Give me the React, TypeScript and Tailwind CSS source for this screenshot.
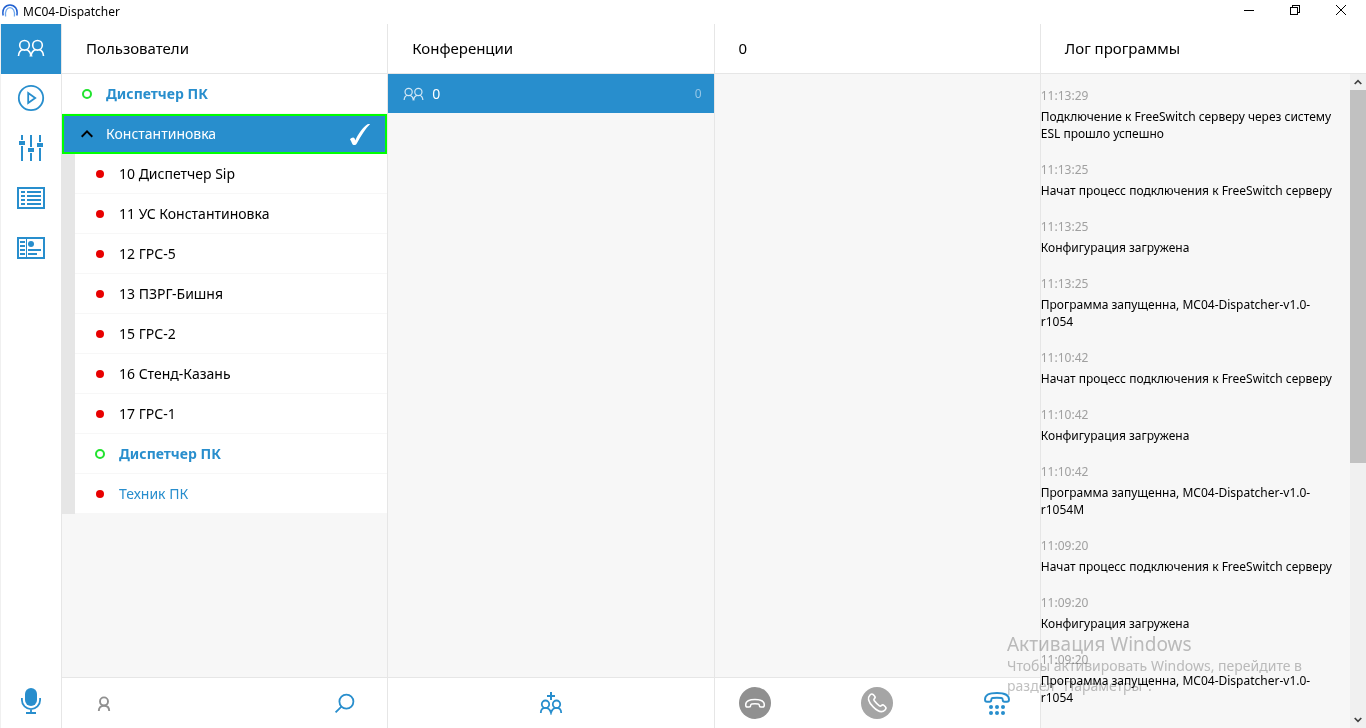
import React from 'react';
import clsx from 'clsx';

type Status = 'online' | 'offline' | 'group';

interface Contact {
  name: string;
  status: Status;
  tone?: string;
}

interface LogEntry {
  time: string;
  text: string;
}

const members: Contact[] = [
  { name: '10 Диспетчер Sip', status: 'offline' },
  { name: '11 УС Константиновка', status: 'offline' },
  { name: '12 ГРС-5', status: 'offline' },
  { name: '13 ПЗРГ-Бишня', status: 'offline' },
  { name: '15 ГРС-2', status: 'offline' },
  { name: '16 Стенд-Казань', status: 'offline' },
  { name: '17 ГРС-1', status: 'offline' },
  { name: 'Диспетчер ПК', status: 'online', tone: 'font-bold text-[#288ecd]' },
  { name: 'Техник ПК', status: 'offline', tone: 'text-[#288ecd]' },
];

const log: LogEntry[] = [
  { time: '11:13:29', text: 'Подключение к FreeSwitch серверу через систему ESL прошло успешно' },
  { time: '11:13:25', text: 'Начат процесс подключения к FreeSwitch серверу' },
  { time: '11:13:25', text: 'Конфигурация загружена' },
  { time: '11:13:25', text: 'Программа запущенна, MC04-Dispatcher-v1.0-r1054' },
  { time: '11:10:42', text: 'Начат процесс подключения к FreeSwitch серверу' },
  { time: '11:10:42', text: 'Конфигурация загружена' },
  { time: '11:10:42', text: 'Программа запущенна, MC04-Dispatcher-v1.0-r1054M' },
  { time: '11:09:20', text: 'Начат процесс подключения к FreeSwitch серверу' },
  { time: '11:09:20', text: 'Конфигурация загружена' },
  { time: '11:09:20', text: 'Программа запущенна, MC04-Dispatcher-v1.0-r1054' },
];

function PeopleIcon({ className }: { className?: string }) {
  return (
    <svg viewBox="0 0 28 18" className={className} fill="none" stroke="currentColor" strokeWidth="1.6">
      <circle cx="7.5" cy="6.3" r="4.8" />
      <circle cx="20.5" cy="6.3" r="4.8" />
      <path d="M1.500 17c.2-3.400 1.700-5.600 4.300-6.400M9.200 10.600c2.600.8 4.200 3 4.800 6.200.6-3.200 2.200-5.400 4.800-6.200M22.200 10.600c2.600.8 4.100 3 4.300 6.400" />
      <path d="M12.500 17h3" strokeWidth="1" />
    </svg>
  );
}

function PlayIcon() {
  return (
    <svg viewBox="0 0 28 28" className="size-7" fill="none" stroke="currentColor" strokeWidth="1.8">
      <circle cx="14" cy="14" r="12.2" />
      <path d="M11.2 9v10l7-5z" />
    </svg>
  );
}

function SlidersIcon() {
  return (
    <svg viewBox="0 0 28 28" className="size-7" fill="currentColor">
      <path d="M4 1h2v26H4zM13 1h2v26h-2zM22 1h2v26h-2z" />
      <path d="M1 6h8v6H1zM10 13h8v6h-8zM19 8h8v6h-8z" fill="#fff" />
      <path d="M2 7h6v4H2zM11 14h6v4h-6zM20 9h6v4h-6z" />
    </svg>
  );
}

function ListIcon() {
  return (
    <svg viewBox="0 0 28 22" className="h-[22px] w-7" fill="none" stroke="currentColor" strokeWidth="2">
      <path d="M1 1h26v20H1z" />
      <path d="M4 5h4M10 5h14M4 9h4M10 9h14M4 13h4M10 13h14M4 17h4M10 17h14" />
    </svg>
  );
}

function CardIcon() {
  return (
    <svg viewBox="0 0 28 22" className="h-[22px] w-7" fill="none" stroke="currentColor" strokeWidth="2">
      <path d="M1 1h26v20H1z" />
      <path d="M3 5h5M3 9h5M3 13h5M3 17h5M11 13h13M11 17h9" />
      <path d="M9.5 1v20" strokeWidth="1" />
      <circle cx="14" cy="7" r="3" fill="currentColor" stroke="none" />
    </svg>
  );
}

function MicIcon() {
  return (
    <svg viewBox="0 0 20 26" className="h-[26px] w-5" fill="none" stroke="currentColor" strokeWidth="1.8">
      <rect x="4" y="0" width="12" height="18" rx="6" fill="currentColor" stroke="none" />
      <path d="M.9 10v2a9.1 9.1 0 0 0 18.2 0v-2M10 21v4M5 25h10" />
    </svg>
  );
}

function UserIcon() {
  return (
    <svg viewBox="0 0 24 24" className="size-6" fill="none" stroke="currentColor" strokeWidth="1.9">
      <circle cx="12" cy="10.4" r="4" />
      <path d="M6.800 20c0-3.200 1.800-5.300 5.200-5.300s5.200 2.100 5.200 5.300" />
    </svg>
  );
}

function SearchIcon() {
  return (
    <svg viewBox="0 0 24 24" className="size-6" fill="none" stroke="currentColor" strokeWidth="1.8">
      <circle cx="13.4" cy="10.6" r="7" />
      <path d="M8.4 15.6 2.6 21.4" />
    </svg>
  );
}

function AddGroupIcon() {
  return (
    <svg viewBox="0 0 24 24" className="size-6" fill="none" stroke="currentColor" strokeWidth="1.8">
      <path d="M12 1v8M8 5h8" strokeWidth="2" />
      <circle cx="6.500" cy="13.200" r="3.700" />
      <circle cx="17.500" cy="13.200" r="3.700" />
      <path d="M1.800 22c0-3 1.700-5.100 4.700-5.100s4.700 2.100 5.500 4.900c.8-2.800 2.500-4.900 5.500-4.900s4.700 2.100 4.700 5.100" />
    </svg>
  );
}

const handset =
  'M1.2 6.4C1.2 2.6 5 1 10.5 1s9.300 1.600 9.300 5.400c0 1.600-.6 2.200-1.800 2.200h-1.600c-1.200 0-1.600-.6-1.600-1.800 0-1-.4-1.200-1-1.300-2-.3-4.600-.3-6.600 0-.6.100-1 .3-1 1.300 0 1.200-.4 1.800-1.600 1.800H3c-1.200 0-1.800-.6-1.800-2.200z';

function HangUpIcon() {
  return (
    <svg viewBox="0 0 32 32" className="size-8" fill="none">
      <circle cx="16" cy="16" r="16" fill="#909090" />
      <path d={handset} transform="translate(5.5 11.500)" stroke="#fff" strokeWidth="1.5" />
    </svg>
  );
}

function CallIcon() {
  return (
    <svg viewBox="0 0 32 32" className="size-8" fill="none">
      <circle cx="16" cy="16" r="16" fill="#a5a5a5" />
      <path d={handset} transform="translate(15.8 16.200) rotate(-135) scale(1.140) translate(-10.500 -5.500)" stroke="#fff" strokeWidth="1.4" />
    </svg>
  );
}

function DialpadIcon() {
  return (
    <svg viewBox="0 0 28 24" className="h-6 w-7" fill="none">
      <path
        d="M2 8.500C2 3.500 6 2 14 2s12 1.500 12 6.500c0 1.500-.6 2.300-2 2.300h-2.500c-1.500 0-1.800-.8-1.800-2.100 0-1.200-.5-1.600-1.300-1.700-2.800-.4-6-.4-8.800 0-.8.100-1.300.5-1.300 1.700 0 1.300-.3 2.100-1.800 2.100H4c-1.400 0-2-.8-2-2.300z"
        stroke="currentColor"
        strokeWidth="1.900"
      />
      <g fill="currentColor">
        <circle cx="8" cy="16" r="2" />
        <circle cx="14" cy="16" r="2" />
        <circle cx="20" cy="16" r="2" />
        <circle cx="8" cy="22" r="2" />
        <circle cx="14" cy="22" r="2" />
        <circle cx="20" cy="22" r="2" />
      </g>
    </svg>
  );
}

function StatusMark({ status }: { status: Status }) {
  return (
    <svg viewBox="0 0 12 12" className="size-3 shrink-0" fill="none">
      {status === 'online' && <circle cx="6" cy="6" r="4" stroke="#21e32f" strokeWidth="2" />}
      {status === 'offline' && <circle cx="6" cy="6" r="4" fill="#e80000" />}
      {status === 'group' && <path d="M.7 8.700 6 3.400l5.300 5.300" stroke="#000" strokeWidth="2" />}
    </svg>
  );
}

function ContactRow({ name, status, tone }: Contact) {
  return (
    <li className="border-b border-[#f7f7f7]">
      <button className={clsx('flex h-[39px] w-full items-center gap-[13px] bg-white pl-[19px] text-left', tone)}>
        <StatusMark status={status} />
        {name}
      </button>
    </li>
  );
}

function Column({ title, footer, children }: { title: string; footer?: React.ReactNode; children?: React.ReactNode }) {
  return (
    <section className="flex min-h-0 min-w-0 flex-col border-l border-[#e6e6e6] bg-[#f7f7f7]">
      <h2 className="flex h-[50px] shrink-0 items-center border-b border-[#e6e6e6] bg-white pl-6 text-[15px]">{title}</h2>
      <div className="flex min-h-0 flex-1 flex-col">{children}</div>
      {footer && <footer className="h-[51px] shrink-0 border-t border-[#e6e6e6] bg-white">{footer}</footer>}
    </section>
  );
}

const navItems = [
  { label: 'Пользователи', icon: <PeopleIcon className="h-[18px] w-7" /> },
  { label: 'Воспроизведение', icon: <PlayIcon /> },
  { label: 'Настройки', icon: <SlidersIcon /> },
  { label: 'Список', icon: <ListIcon /> },
  { label: 'Карточки', icon: <CardIcon /> },
];

function TitleBar() {
  return (
    <header className="flex h-6 shrink-0 items-center justify-between">
      <div className="flex items-center gap-[5px] pl-0.5">
        <svg viewBox="0 0 16 16" className="size-4" fill="none">
          <path d="M1.200 11.500C-.3 5 3.500 1 8 1s8.300 4 6.800 10.500" stroke="#1f5fd0" strokeWidth="1.500" />
          <path d="M3.600 12.500C2.800 7 5 3.600 8 3.600s5.200 3.400 4.400 8.900" stroke="#6fa8ee" strokeWidth="1.300" />
        </svg>
        <h1 className="text-xs">MC04-Dispatcher</h1>
      </div>
      <div className="flex h-full pr-0.5 pb-1">
        <button aria-label="Свернуть" className="flex w-[46px] items-center justify-center">
          <svg viewBox="0 0 10 10" className="size-2.5" stroke="#000" shapeRendering="crispEdges"><path d="M0 5.500h10" /></svg>
        </button>
        <button aria-label="Развернуть" className="flex w-[46px] items-center justify-center">
          <svg viewBox="0 0 10 10" className="size-2.5" stroke="#000" fill="none" shapeRendering="crispEdges">
            <path d="M.5 2.500h7v7h-7zM2.500 2.500v-2h7v7h-2" />
          </svg>
        </button>
        <button aria-label="Закрыть" className="flex w-[46px] items-center justify-center">
          <svg viewBox="0 0 10 10" className="size-2.5" stroke="#000"><path d="M0 0l10 10M10 0 0 10" /></svg>
        </button>
      </div>
    </header>
  );
}

function ScrollBar() {
  return (
    <div className="flex w-4 shrink-0 flex-col bg-[#f0f0f0]">
      <button aria-label="Вверх" className="flex h-4 items-center justify-center">
        <svg viewBox="0 0 8 6" className="h-1.5 w-2" fill="none" stroke="#404040" strokeWidth="1.700"><path d="m.7 5 3.300-3.300L7.300 5" /></svg>
      </button>
      <div className="flex-1">
        <div className="h-3/5 bg-[#c1c1c1]" />
      </div>
      <button aria-label="Вниз" className="flex h-4 items-center justify-center">
        <svg viewBox="0 0 8 6" className="h-1.5 w-2" fill="none" stroke="#404040" strokeWidth="1.700"><path d="m.7 1 3.300 3.300L7.300 1" /></svg>
      </button>
    </div>
  );
}

export default function App() {
  return (
    <div className="relative flex h-screen flex-col overflow-hidden bg-white font-['Noto_Sans',sans-serif] text-sm text-black">
      <TitleBar />

      <div className="flex min-h-0 flex-1">
        <nav className="flex w-[61px] shrink-0 flex-col border-l border-[#f0f0f0] text-[#288ecd]">
          {navItems.map((item, i) => (
            <button
              key={item.label}
              aria-label={item.label}
              className={clsx('flex h-[50px] items-center justify-center pb-0.5', i === 0 && 'bg-[#288ecd] text-white')}
            >
              {item.icon}
            </button>
          ))}
          <button aria-label="Микрофон" className="mt-auto flex h-[54px] items-center justify-center">
            <MicIcon />
          </button>
        </nav>

        <main className="grid min-w-0 flex-1 grid-cols-4">
          <Column
            title="Пользователи"
            footer={
              <div className="flex h-full items-center justify-between px-[30px]">
                <button aria-label="Пользователь" className="text-[#909090]"><UserIcon /></button>
                <button aria-label="Поиск" className="text-[#288ecd]"><SearchIcon /></button>
              </div>
            }
          >
            <ul>
              <ContactRow name="Диспетчер ПК" status="online" tone="font-bold text-[#288ecd]" />
              <li>
                <button className="flex h-10 w-full items-center gap-[13px] bg-[#288ecd] pr-4 pl-[19px] text-left text-white ring-2 ring-[#00ff00] ring-inset">
                  <StatusMark status="group" />
                  <span className="flex-1">Константиновка</span>
                  <svg viewBox="0 0 22 24" className="h-6 w-[22px]" fill="#fff">
                    <path d="M1 17.500c1.300-1.900 3.600-2.500 4.500-1.200.4.600.6 1.300.8 2.200C9.500 11.500 14 5 18.500 2.300c.8-.5 1.800-.4 2.700-.4C16.500 6.500 12 13.500 8.200 20.800c-.6 1.200-1 2-2.300 2.200-1.500.2-2.200-.2-2.800-1.500-.6-1.400-1-2.800-2.100-4z" />
                  </svg>
                </button>
                <ul className="border-l-[13px] border-[#e6e6e6]">
                  {members.map(c => (
                    <ContactRow key={c.name} {...c} />
                  ))}
                </ul>
              </li>
            </ul>
          </Column>

          <Column
            title="Конференции"
            footer={
              <div className="flex h-full items-center justify-center">
                <button aria-label="Добавить конференцию" className="text-[#288ecd]"><AddGroupIcon /></button>
              </div>
            }
          >
            <button className="flex h-[39px] items-center gap-2 bg-[#288ecd] pr-3 pl-[15px] text-white">
              <PeopleIcon className="h-[14px] w-[21px] text-[#d4e8f5]" />
              <span>0</span>
              <span className="ml-auto text-xs text-[#94c6e6]">0</span>
            </button>
          </Column>

          <Column
            title="0"
            footer={
              <div className="flex h-full items-center justify-between pr-[29px] pl-6">
                <button aria-label="Завершить"><HangUpIcon /></button>
                <button aria-label="Позвонить"><CallIcon /></button>
                <button aria-label="Набор номера" className="text-[#288ecd]"><DialpadIcon /></button>
              </div>
            }
          />

          <Column title="Лог программы">
            <div className="flex min-h-0 flex-1">
              <ol className="min-w-0 flex-1 space-y-[19px] overflow-hidden pt-[13px] pr-4 text-xs leading-[17px]">
                {log.map((entry, i) => (
                  <li key={i} className="space-y-1">
                    <time className="block text-[#a0a0a0]">{entry.time}</time>
                    <p>{entry.text}</p>
                  </li>
                ))}
              </ol>
              <ScrollBar />
            </div>
          </Column>
        </main>
      </div>

      <aside className="pointer-events-none absolute right-0 bottom-8 w-[359px] text-[#c0c0c0] mix-blend-multiply">
        <p className="text-[19px] leading-6">Активация Windows</p>
        <p className="w-[320px] leading-5">Чтобы активировать Windows, перейдите в раздел "Параметры".</p>
      </aside>
    </div>
  );
}
